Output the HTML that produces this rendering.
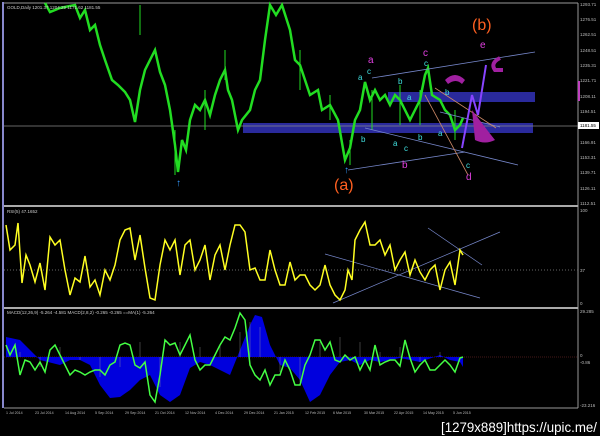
<!DOCTYPE html><html><head><style>body{margin:0;background:#000;width:600px;height:436px;overflow:hidden}svg{display:block}</style></head><body>
<svg width="600" height="436" xmlns="http://www.w3.org/2000/svg" font-family="Liberation Sans, sans-serif">
<rect width="600" height="436" fill="#000"/>
<rect x="2" y="2" width="2" height="406" fill="#8888cc"/>
<line x1="4" y1="3" x2="578" y2="3" stroke="#999"/>
<line x1="578" y1="3" x2="578" y2="408" stroke="#999"/>
<line x1="4" y1="206" x2="578" y2="206" stroke="#aaa" stroke-width="2"/>
<line x1="4" y1="308" x2="578" y2="308" stroke="#aaa" stroke-width="2"/>
<line x1="4" y1="408" x2="578" y2="408" stroke="#999"/>
<rect x="243" y="123" width="290" height="10" fill="#2a2a9c"/>
<rect x="388" y="92" width="147" height="10" fill="#2a2a9c"/>
<line x1="4" y1="126" x2="578" y2="126" stroke="#888" stroke-width="0.7"/>
<polyline fill="none" stroke="#22dd22" stroke-width="2.5" points="45,3 50,12 60,8 75,5 80,18 85,10 90,30 95,25 100,45 105,60 112,80 118,85 125,92 130,100 135,122 140,90 145,70 150,60 155,50 160,72 165,85 170,110 175,145 178,172 182,140 186,150 190,120 195,105 200,110 205,100 210,115 215,95 220,80 225,70 228,90 232,100 238,130 242,120 250,110 255,90 260,80 265,40 270,5 276,15 282,5 290,30 295,60 300,65 305,80 310,95 318,90 322,110 330,105 338,120 345,160 350,148 355,120 360,110 365,82 370,100 375,90 380,100 385,95 390,105 395,95 400,100 405,110 410,120 415,110 420,100 425,75 428,68 432,95 440,100 445,110 450,115 455,130 460,125 463,118"/>
<g stroke="#22dd22" stroke-width="1">
<path d="M140,5v30M175,130v45M205,90v40M225,50v30M300,50v40M330,95v25M350,140v25M372,90v40M400,85v40M420,90v35M455,110v30"/>
</g>
<g stroke="#7788cc" stroke-width="0.8" fill="none">
<line x1="372" y1="78" x2="535" y2="52"/>
<line x1="365" y1="128" x2="518" y2="165"/>
<line x1="348" y1="170" x2="465" y2="152"/>
<line x1="440" y1="112" x2="500" y2="127"/>
</g>
<line x1="425" y1="95" x2="468" y2="175" stroke="#cc8866" stroke-width="0.8"/>
<line x1="435" y1="88" x2="496" y2="128" stroke="#cc8866" stroke-width="0.8"/>
<polyline points="462,148 472,95 478,115 486,65" fill="none" stroke="#8844ff" stroke-width="2"/>
<path d="M445,80 q10,-10 20,0 l-3,4 q-6,-6 -14,0z" fill="#a020a0"/>
<path d="M472,110 q15,20 23,30 q-10,5 -20,0z" fill="#a020a0"/>
<path d="M500,58 q-10,5 -5,12 l8,0" stroke="#a020a0" stroke-width="4" fill="none"/>
<g font-size="10">
<text x="368" y="63" fill="#e040e0">a</text><text x="367" y="74" fill="#40e0e0" font-size="8">c</text>
<text x="358" y="80" fill="#40e0e0" font-size="8">a</text>
<text x="423" y="56" fill="#e040e0">c</text><text x="424" y="66" fill="#40e0e0" font-size="8">c</text>
<text x="398" y="84" fill="#40e0e0" font-size="8">b</text><text x="407" y="100" fill="#40e0e0" font-size="8">a</text>
<text x="445" y="95" fill="#40e0e0" font-size="8">b</text>
<text x="361" y="142" fill="#40e0e0" font-size="8">b</text><text x="393" y="146" fill="#40e0e0" font-size="8">a</text>
<text x="404" y="151" fill="#40e0e0" font-size="8">c</text><text x="418" y="140" fill="#40e0e0" font-size="8">b</text>
<text x="438" y="136" fill="#40e0e0" font-size="8">a</text>
<text x="402" y="168" fill="#e040e0">b</text>
<text x="466" y="168" fill="#40e0e0" font-size="8">c</text>
<text x="466" y="180" fill="#e040e0">d</text>
<text x="480" y="48" fill="#e040e0">e</text>
<text x="472" y="30" fill="#ff6020" font-size="16">(b)</text>
<text x="334" y="190" fill="#ff6020" font-size="16">(a)</text>
</g>
<text x="176" y="186" fill="#3399ff" font-size="10">↑</text>
<text x="344" y="173" fill="#3399ff" font-size="10">↑</text>
<text x="7" y="9" fill="#ccc" font-size="4.5">GOLD,Daily  1201.37 1204.29 1171.62 1181.55</text>
<g fill="#bbb" font-size="4.5">
<text x="580" y="6">1293.71</text><text x="580" y="21">1276.51</text><text x="580" y="36">1262.51</text><text x="580" y="52">1248.51</text><text x="580" y="67">1235.31</text><text x="580" y="82">1221.71</text><text x="580" y="98">1208.11</text><text x="580" y="113">1194.51</text><text x="580" y="144">1166.91</text><text x="580" y="159">1153.31</text><text x="580" y="174">1139.71</text><text x="580" y="190">1126.11</text><text x="580" y="205">1112.51</text>
<text x="580" y="212">100</text><text x="580" y="272">37</text><text x="580" y="305">0</text>
<text x="580" y="313">29.285</text><text x="580" y="357">0</text><text x="580" y="364">-0.86</text><text x="580" y="407">-23.216</text>
</g>
<rect x="578" y="122" width="21" height="7" fill="#fff"/><text x="580" y="127" font-size="4.5" fill="#000">1181.55</text>
<rect x="578" y="81" width="2" height="20" fill="#c040c0"/>
<text x="7" y="213" fill="#ccc" font-size="4.5">RSI(5) 47.1652</text>
<line x1="4" y1="270" x2="578" y2="270" stroke="#666" stroke-dasharray="1,2"/>
<g stroke="#7788cc" stroke-width="0.7"><line x1="325" y1="254" x2="480" y2="298"/><line x1="333" y1="303" x2="500" y2="232"/><line x1="428" y1="228" x2="482" y2="265"/></g>
<polyline fill="none" stroke="#ffff22" stroke-width="1.5" points="6,225 10,250 15,245 18,223 22,283 26,255 30,265 35,282 40,263 45,290 50,237 55,245 60,240 65,270 70,295 75,278 80,282 85,256 90,287 95,280 100,295 105,270 110,280 115,265 120,240 125,230 130,228 135,260 140,235 145,268 150,298 155,300 160,265 165,240 170,250 175,240 180,275 185,245 190,240 195,270 200,260 205,245 210,280 215,255 220,245 225,270 230,245 235,225 240,225 245,232 250,270 255,268 260,280 265,280 270,250 275,270 280,285 285,285 290,262 295,280 300,275 305,275 310,285 315,290 320,285 325,265 330,285 335,295 340,300 345,290 348,270 352,280 355,240 360,230 365,222 370,245 375,245 380,240 385,255 390,245 395,270 400,260 405,252 410,275 415,260 420,272 425,280 430,270 435,265 440,290 445,270 450,262 455,285 460,250 463,255"/>
<text x="7" y="314" fill="#ccc" font-size="4.5">MACD(12,26,9) -5.264 -4.581  MACD(2,8,2) -0.265 -0.265  ==MA(1) -5.264</text>
<line x1="4" y1="357" x2="578" y2="357" stroke="#883333" stroke-dasharray="1,1" stroke-width="0.5"/>
<path fill="#0000dd" d="M6,337 L20,340 L30,350 L40,360 L60,365 L70,360 L80,360 L90,365 L100,385 L110,398 L120,397 L130,390 L140,380 L150,375 L160,395 L170,402 L180,395 L190,368 L200,362 L210,365 L220,370 L230,375 L240,350 L250,325 L255,315 L262,317 L270,345 L280,365 L290,368 L300,380 L310,402 L320,395 L330,375 L340,362 L350,360 L360,365 L370,360 L380,362 L400,358 L420,362 L440,355 L450,360 L460,362 L463,367 L463,357 L6,357Z"/>
<g stroke="#999" stroke-width="0.4">
<path d="M20,357v-5M40,357v10M60,357v-10M80,357v3M100,357v20M120,357v10M140,357v-15M160,357v30M180,357v-15M200,357v-10M220,357v-12M240,357v-25M250,357v-35M260,357v-30M280,357v15M300,357v25M320,357v-15M340,357v-20M360,357v-15M380,357v-5M400,357v-10M420,357v5M440,357v-5"/>
</g>
<polyline fill="none" stroke="#44ff44" stroke-width="1.5" points="6,345 10,355 15,345 20,375 25,360 30,362 35,370 40,362 45,372 50,350 55,345 60,355 65,365 70,375 75,370 80,372 85,375 90,372 95,370 100,370 105,375 110,365 115,362 120,345 125,343 130,345 135,365 140,368 145,362 150,395 155,402 160,375 165,340 170,345 175,343 180,355 185,345 190,335 195,360 200,370 205,365 210,365 215,355 220,345 225,337 230,340 235,328 240,313 245,320 250,365 255,375 260,380 265,370 270,385 275,375 280,375 285,360 290,370 295,385 300,385 305,365 310,355 315,340 320,340 325,350 330,342 335,360 340,362 345,355 350,360 355,357 360,370 365,360 370,370 375,345 380,365 385,362 390,360 395,360 400,366 405,340 410,358 415,372 420,365 425,360 430,370 435,370 440,365 445,360 450,365 455,372 460,358 463,357"/>
<g fill="#bbb" font-size="3.6">
<text x="6" y="414">1 Jul 2014</text><text x="35" y="414">23 Jul 2014</text><text x="65" y="414">14 Aug 2014</text><text x="95" y="414">5 Sep 2014</text><text x="125" y="414">29 Sep 2014</text><text x="155" y="414">21 Oct 2014</text><text x="185" y="414">12 Nov 2014</text><text x="215" y="414">4 Dec 2014</text><text x="244" y="414">29 Dec 2014</text><text x="274" y="414">21 Jan 2015</text><text x="305" y="414">12 Feb 2015</text><text x="333" y="414">6 Mar 2015</text><text x="364" y="414">30 Mar 2015</text><text x="394" y="414">22 Apr 2015</text><text x="423" y="414">14 May 2015</text><text x="453" y="414">5 Jun 2015</text>
</g>
<text x="441" y="432" fill="#fff" font-size="14" textLength="156" lengthAdjust="spacingAndGlyphs">[1279x889]https://upic.me/</text>
</svg>
</body></html>
